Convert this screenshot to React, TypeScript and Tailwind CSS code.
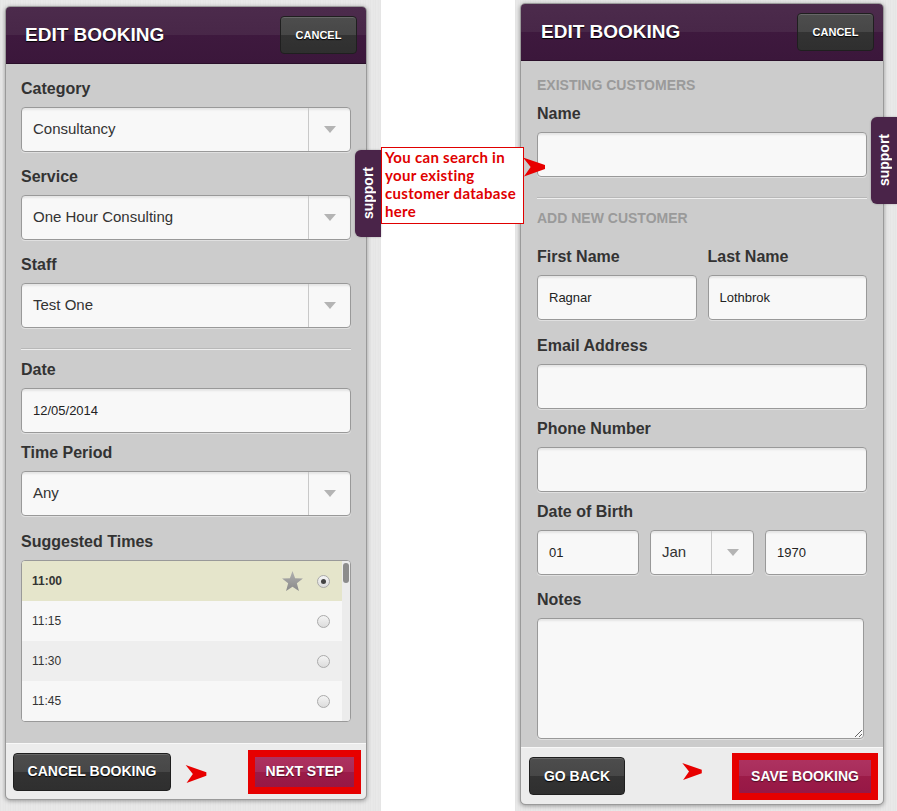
import React from "react";

const font = { fontFamily: '"Liberation Sans", Arial, sans-serif' };

function Arrow({ className = "" }: { className?: string }) {
  return (
    <svg viewBox="0 0 23 20" className={className}>
      <polygon points="0,0 23,8 23,12 1,20 8,10" fill="#e80000" />
    </svg>
  );
}

function DarkButton({ label, className = "" }: { label: string; className?: string }) {
  return (
    <div
      className={`flex items-center justify-center rounded-[4px] border border-[#1f1f1f] bg-[linear-gradient(to_bottom,#4d4d4d_0%,#474747_50%,#333333_50%,#2f2f2f_100%)] font-bold uppercase text-white [text-shadow:0_1px_1px_#000] shadow-[inset_0_1px_0_rgba(255,255,255,0.15)] ${className}`}
    >
      {label}
    </div>
  );
}

function RedButton({ label, className = "" }: { label: string; className?: string }) {
  return (
    <div className={`border-[7px] border-[#e60000] bg-[#e60000] ${className}`}>
      <div className="flex h-full w-full items-center justify-center bg-[linear-gradient(to_bottom,#ad3260_0%,#a72b59_50%,#9c1b48_50%,#961846_100%)] text-[14px] font-bold uppercase text-white [text-shadow:0_1px_1px_rgba(0,0,0,0.5)]">
        {label}
      </div>
    </div>
  );
}

function Header({ padLeft }: { padLeft: string }) {
  return (
    <div
      className={`flex h-[57px] shrink-0 items-center justify-between rounded-t-[4px] border-b border-[#2a0f2a] bg-[linear-gradient(to_bottom,#4c2b4c_0%,#482748_50%,#3e193e_50%,#3b173b_100%)] pr-[9px] ${padLeft}`}
    >
      <div className="text-[19px] font-bold text-white [text-shadow:0_1px_1px_#000]">EDIT BOOKING</div>
      <DarkButton label="CANCEL" className="h-[38px] w-[77px] text-[11px]" />
    </div>
  );
}

function Label({ children, className = "" }: { children: React.ReactNode; className?: string }) {
  return <div className={`h-[18px] text-[16px] font-bold leading-[18px] text-[#333] ${className}`}>{children}</div>;
}

const fieldBox =
  "rounded-[4px] border border-[#999] bg-[#f8f8f8] shadow-[inset_0_3px_2px_-1px_rgba(0,0,0,0.08),0_1px_0_rgba(255,255,255,0.4)]";

function Select({ value, className = "", size = "text-[15px]" }: { value: string; className?: string; size?: string }) {
  return (
    <div className={`flex h-[45px] mt-[9px] ${fieldBox} ${className}`}>
      <div className={`flex flex-1 items-center pl-[11px] text-[#333] ${size}`}>{value}</div>
      <div className="flex w-[42px] items-center justify-center border-l border-[#c9c9c9]">
        <svg width="12" height="7" viewBox="0 0 12 7">
          <polygon points="0,0 12,0 6,7" fill="#b4b4b4" />
        </svg>
      </div>
    </div>
  );
}

function Input({ value = "", className = "" }: { value?: string; className?: string }) {
  return (
    <div className={`flex h-[45px] mt-[9px] items-center pl-[11px] text-[13px] text-[#222] ${fieldBox} ${className}`}>
      {value}
    </div>
  );
}

function Radio({ checked }: { checked?: boolean }) {
  return (
    <div className="flex h-[13px] w-[13px] items-center justify-center rounded-full border border-[#aaa] bg-[linear-gradient(to_bottom,#f4f4f4,#dcdcdc)]">
      {checked && <div className="h-[5px] w-[5px] rounded-full bg-[#444]" />}
    </div>
  );
}

function Star() {
  return (
    <svg width="21" height="20" viewBox="0 0 24 23">
      <defs>
        <linearGradient id="sg" x1="0" y1="0" x2="0" y2="1">
          <stop offset="0" stopColor="#b0b0b0" />
          <stop offset="1" stopColor="#8a8a8a" />
        </linearGradient>
      </defs>
      <polygon points="12,0 15,8.2 24,8.6 17,14.2 19.4,23 12,18 4.6,23 7,14.2 0,8.6 9,8.2" fill="url(#sg)" />
    </svg>
  );
}

const times = [
  { t: "11:00", bg: "bg-[#e5e5cb]", bold: true },
  { t: "11:15", bg: "bg-[#f7f7f7]" },
  { t: "11:30", bg: "bg-[#eeeeee]" },
  { t: "11:45", bg: "bg-[#f7f7f7]" },
];

function SupportTab({ className }: { className: string }) {
  return (
    <div
      className={`absolute flex h-[87px] w-[26px] items-center justify-center rounded-l-[6px] bg-[#4a2449] shadow-[0_0_2px_rgba(0,0,0,0.3)] ${className}`}
    >
      <span className="rotate-180 text-[14px] font-bold text-white [writing-mode:vertical-rl]">support</span>
    </div>
  );
}

const texture =
  "bg-[#e7e7e7] bg-[repeating-linear-gradient(90deg,#e3e3e3_0px,#ebebeb_2px,#e5e5e5_3px,#e9e9e9_5px)]";

const panel =
  "flex flex-col rounded-[5px] border border-[#9a9a9a] bg-[#cccccc] shadow-[0_1px_4px_rgba(0,0,0,0.35)]";

export default function App() {
  return (
    <div className="relative flex h-[811px] w-[897px] overflow-hidden bg-white" style={font}>
      {/* left screenshot */}
      <div className={`h-full w-[381px] pl-[5px] pt-[6px] ${texture}`}>
        <div className={`${panel} h-[794px] w-[362px]`}>
          <Header padLeft="pl-[19px]" />
          <div className="flex-1 px-[15px] pt-[16px]">
            <Label>Category</Label>
            <Select value="Consultancy" />
            <Label className="mt-[16px]">Service</Label>
            <Select value="One Hour Consulting" />
            <Label className="mt-[16px]">Staff</Label>
            <Select value="Test One" />
            <div className="mt-[21px] h-[1px] border-t border-[#eeeeee] shadow-[0_-1px_0_#b8b8b8]" />
            <Label className="mt-[11px]">Date</Label>
            <Input value="12/05/2014" />
            <Label className="mt-[11px]">Time Period</Label>
            <Select value="Any" />
            <Label className="mt-[17px]">Suggested Times</Label>
            <div className="mt-[9px] flex h-[162px] overflow-hidden rounded-[4px] border border-[#999] bg-[#f7f7f7]">
              <div className="flex-1">
                {times.map((r) => (
                  <div key={r.t} className={`flex h-[40px] items-center pl-[10px] pr-[12px] ${r.bg}`}>
                    <span className={`flex-1 text-[12px] text-[#333] ${r.bold ? "font-bold" : ""}`}>{r.t}</span>
                    {r.bold && (
                      <span className="mr-[14px] flex">
                        <Star />
                      </span>
                    )}
                    <Radio checked={r.bold} />
                  </div>
                ))}
              </div>
              <div className="w-[8px] bg-[#ececec] pt-[2px]">
                <div className="mx-auto h-[20px] w-[6px] rounded-[3px] bg-[#8c8c8c]" />
              </div>
            </div>
          </div>
          <div className="flex h-[56px] shrink-0 items-center rounded-b-[5px] border-t border-[#f8f8f8] bg-[#ececec] pl-[7px] pr-[5px]">
            <DarkButton label="CANCEL BOOKING" className="h-[38px] w-[158px] text-[14px]" />
            <Arrow className="ml-[14px] mt-[4px] h-[18px] w-[22px]" />
            <RedButton label="NEXT STEP" className="ml-auto h-[44px] w-[113px]" />
          </div>
        </div>
      </div>

      {/* gap */}
      <div className="h-full w-[134px] bg-white" />

      {/* right screenshot */}
      <div className={`h-full flex-1 pl-[5px] pt-[3px] ${texture}`}>
        <div className={`${panel} h-[802px] w-[364px]`}>
          <Header padLeft="pl-[20px]" />
          <div className="flex-1 px-[16px] pt-[16px]">
            <div className="h-[16px] text-[14px] font-bold uppercase leading-[16px] text-[#9a9a9a]">Existing Customers</div>
            <Label className="mt-[12px]">Name</Label>
            <Input />
            <div className="mt-[21px] h-[1px] border-t border-[#eeeeee] shadow-[0_-1px_0_#b8b8b8]" />
            <div className="mt-[11px] h-[16px] text-[14px] font-bold uppercase leading-[16px] text-[#9a9a9a]">Add New Customer</div>
            <div className="mt-[22px] grid grid-cols-2 gap-x-[11px]">
              <div>
                <Label>First Name</Label>
                <Input value="Ragnar" className="h-[44px]" />
              </div>
              <div>
                <Label>Last Name</Label>
                <Input value="Lothbrok" className="h-[44px]" />
              </div>
            </div>
            <Label className="mt-[17px]">Email Address</Label>
            <Input />
            <Label className="mt-[11px]">Phone Number</Label>
            <Input />
            <Label className="mt-[11px]">Date of Birth</Label>
            <div className="grid grid-cols-[102px_104px_102px] justify-between">
              <Input value="01" />
              <Select value="Jan" size="text-[15px]" />
              <Input value="1970" />
            </div>
            <Label className="mt-[16px]">Notes</Label>
            <textarea
              readOnly
              className={`mt-[9px] block h-[121px] w-[327px] resize ${fieldBox} outline-none`}
            />
          </div>
          <div className="flex h-[57px] shrink-0 items-center rounded-b-[5px] border-t border-[#f8f8f8] bg-[#ececec] pl-[8px] pr-[5px]">
            <DarkButton label="GO BACK" className="h-[38px] w-[96px] text-[14px]" />
            <Arrow className="ml-[56px] mb-[10px] h-[17px] w-[22px]" />
            <RedButton label="SAVE BOOKING" className="ml-auto h-[47px] w-[146px]" />
          </div>
        </div>
      </div>

      {/* overlays */}
      <SupportTab className="left-[355px] top-[150px]" />
      <SupportTab className="left-[871px] top-[117px]" />
      <div
        className="absolute left-[381px] top-[147px] h-[77px] w-[143px] overflow-hidden whitespace-nowrap border border-[#e00000] bg-white pl-[3px] text-[15px] font-bold leading-[18px] tracking-[0.3px] text-[#e00000]"
        style={{ fontFamily: 'Lato, sans-serif' }}
      >
        You can search in
        <br />
        your existing
        <br />
        customer database
        <br />
        here
      </div>
      <Arrow className="absolute left-[523px] top-[157px] h-[20px] w-[22px]" />
    </div>
  );
}
